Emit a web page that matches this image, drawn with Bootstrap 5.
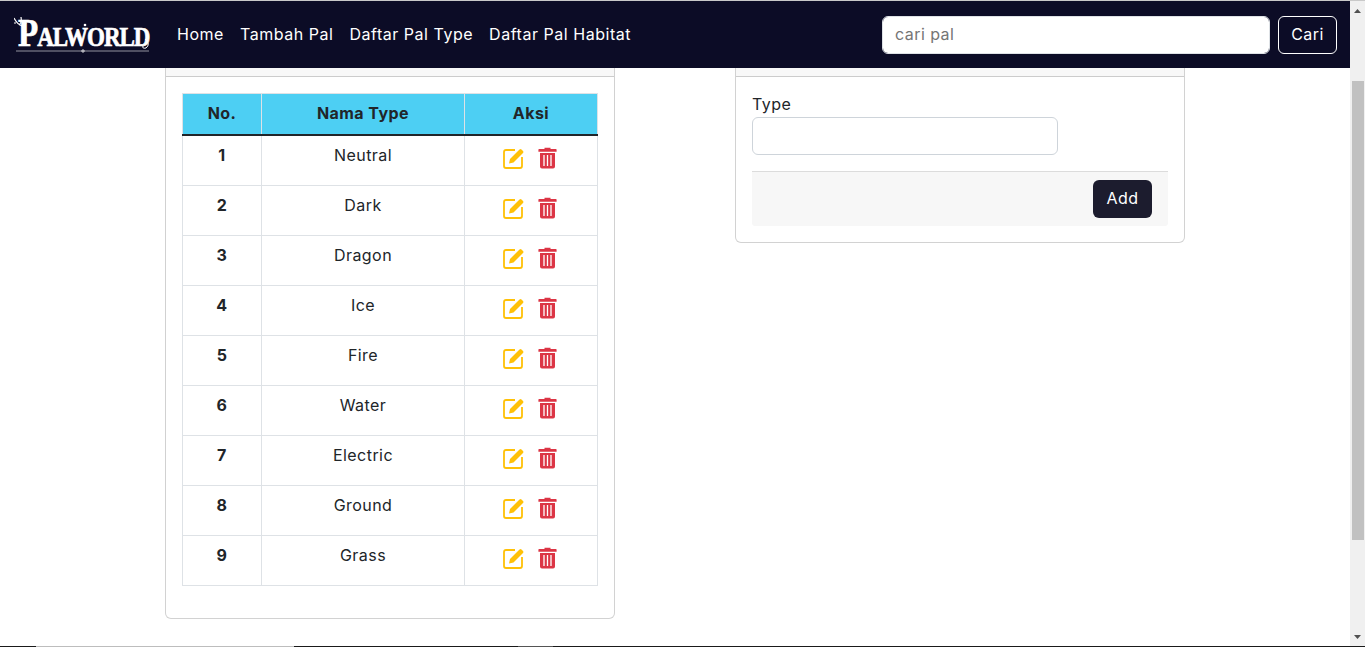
<!DOCTYPE html>
<html lang="id">
<head>
  <meta charset="UTF-8">
  <title>Daftar Pal Type</title>
  <link href="https://cdn.jsdelivr.net/npm/bootstrap@5.3.0/dist/css/bootstrap.min.css" rel="stylesheet">
  <style>
    html, body { height: 100%; overflow: hidden; }
    body { font-family: Inter, "Open Sans", sans-serif; font-size: 16px; letter-spacing: .45px; color: #212529; background: #fff; }
    .form-control, .btn { letter-spacing: .45px; }
    .top-edge { height: 1px; background: #c9c9c9; }
    .screen { height: 645px; }
    .page-col { min-width: 0; }
    .pal-nav { background: #0c0c26; height: 67px; padding: 0 13px 0 14px; }
    .pal-logo { width: 138px; height: 36px; margin-right: 17px; position: relative; color: #fff; text-decoration: none; }
    .pal-logo-text { font-family: "Liberation Serif", serif; font-weight: 700; font-variant: small-caps; font-size: 33px; line-height: 36px; letter-spacing: -1px; padding-left: 4px; white-space: nowrap; display: block; -webkit-text-stroke: .6px #fff; transform: scaleY(1.22); transform-origin: 0 28px; }
    .pal-logo svg { position: absolute; left: 0; top: 0; }
    .pal-nav .nav-link { color: #fff; padding: 0 8px 2px; font-size: 16px; letter-spacing: .53px; }
    .pal-search { width: 388px; height: 38px; margin-right: 8px; padding-bottom: 8px; }
    .pal-search::placeholder { color: #757575; }
    .btn-cari { width: 59px; height: 38px; padding: 0 0 2px; color: #fff; border-color: #fff; }
    .content-area { gap: 120px; }
    .pal-card { width: 450px; }
    .pal-card .card-header { height: 9px; padding: 0; }
    .pal-card-body { padding: 16px; }
    .pal-table { table-layout: fixed; width: 415px; margin-bottom: 16px; text-align: center; }
    .pal-table th, .pal-table td { padding: 7px 8px 8px; height: 50px; vertical-align: top; }
    .pal-table thead th { background: #4dcff3; height: 41px; padding: 6px 8px 8px; vertical-align: middle; border-bottom: 2px solid #212529; }
    .pal-table tbody tr:first-child > * { height: 51px; }
    .aksi-icons { gap: 13px; padding-top: 4px; padding-right: 2px; }
    .type-input { width: 306px; height: 38px; border-color: #ced4da; }
    .type-label { margin-bottom: 0; height: 24px; line-height: 22px; }
    .add-bar { background: #f7f7f7; border-top: 1px solid #dcdcdc; height: 55px; margin-top: 16px; padding: 8px 16px; border-radius: 0 0 3px 3px; }
    .btn-add { background: #1c1c2e; color: #fff; width: 59px; height: 38px; padding: 0 0 2px; }
    .fake-scroll { width: 15px; background: #f0f0f0; }
    .fake-arrow { height: 17px; }
    .fake-track { padding: 63px 1px 0 2px; }
    .fake-thumb { height: 459px; background: #c1c1c1; }
    .bottom-edge { height: 1px; background: #1a1a1a; }
    .bottom-seg { width: 258px; margin-left: 36px; background: #bdbdbd; }
    .bottom-seg-two { width: 35px; margin-left: 224px; background: #555; }
  </style>
</head>
<body>
  <div class="top-edge"></div>
  <div class="screen d-flex">
    <div class="page-col flex-grow-1 d-flex flex-column">
      <nav class="pal-nav d-flex align-items-center">
        <a class="pal-logo d-block" href="#">
          <span class="pal-logo-text">Palworld</span>
          <svg width="138" height="36" viewBox="0 0 138 36" fill="none" stroke="#fff">
            <path d="M0 1 Q3 7 8 9 L12 15 M2 6 L0 6 M5 8 Q8 6 7 0 M8 9 Q11 9 12 6" stroke-width="1.2"/>
            <path d="M2 34 H135" stroke-width=".8" opacity=".7"/>
            <circle cx="69" cy="34" r="1.2" stroke-width=".8"/>
            <circle cx="71" cy="8" r="1.3" fill="#fff" stroke="none"/>
            <path d="M131 22 q6 5 1 9 q-4 1 -3 -2" stroke-width="1"/>
          </svg>
        </a>
        <ul class="nav">
          <li class="nav-item"><a class="nav-link" href="#">Home</a></li>
          <li class="nav-item"><a class="nav-link" href="#">Tambah Pal</a></li>
          <li class="nav-item"><a class="nav-link" href="#">Daftar Pal Type</a></li>
          <li class="nav-item"><a class="nav-link" href="#">Daftar Pal Habitat</a></li>
        </ul>
        <form class="d-flex ms-auto">
          <input class="form-control pal-search" type="search" placeholder="cari pal">
          <button class="btn btn-cari" type="button">Cari</button>
        </form>
      </nav>

      <div class="content-area d-flex justify-content-center align-items-start">
        <div class="card pal-card border-top-0 rounded-top-0">
          <div class="card-header rounded-0"></div>
          <div class="pal-card-body">
            <table class="table table-bordered pal-table">
              <colgroup><col style="width:79px"><col style="width:203px"><col style="width:133px"></colgroup>
              <thead><tr><th>No.</th><th>Nama Type</th><th>Aksi</th></tr></thead>
              <tbody id="type-rows"></tbody>
            </table>
          </div>
        </div>

        <div class="card pal-card border-top-0 rounded-top-0">
          <div class="card-header rounded-0"></div>
          <div class="pal-card-body">
            <label class="form-label type-label d-block" for="type">Type</label>
            <input class="form-control type-input" id="type" type="text">
            <div class="add-bar d-flex justify-content-end">
              <button class="btn btn-add" type="button">Add</button>
            </div>
          </div>
        </div>
      </div>
    </div>

    <div class="fake-scroll d-flex flex-column flex-shrink-0">
      <div class="fake-arrow d-flex justify-content-center">
        <svg width="15" height="17" viewBox="0 0 15 17"><path d="M4 12 L7.5 8 L11 12 Z" fill="#505050"/></svg>
      </div>
      <div class="fake-track flex-grow-1"><div class="fake-thumb"></div></div>
      <div class="fake-arrow d-flex justify-content-center">
        <svg width="15" height="17" viewBox="0 0 15 17"><path d="M4 6 L7.5 10 L11 6 Z" fill="#505050"/></svg>
      </div>
    </div>
  </div>
  <div class="bottom-edge d-flex">
    <div class="bottom-seg"></div>
    <div class="bottom-seg-two"></div>
  </div>

  <script src="https://cdn.jsdelivr.net/npm/bootstrap@5.3.0/dist/js/bootstrap.bundle.min.js"></script>
  <script>
    const types = ["Neutral", "Dark", "Dragon", "Ice", "Fire", "Water", "Electric", "Ground", "Grass"];
    const editIcon = `<svg width="22" height="22" viewBox="0 0 22 22" fill="none"><path d="M12 3 H3 Q1 3 1 5 V19 Q1 21 3 21 H17 Q19 21 19 19 V10" stroke="#ffc107" stroke-width="1.8"/><path d="M6 16.5 L7 12 L16.5 2.5 Q17.5 1.5 18.5 2.5 L20 4 Q21 5 20 6 L10.5 15.5 Z" fill="#ffc107"/></svg>`;
    const trashIcon = `<svg width="19" height="22" viewBox="0 0 19 22"><path d="M6.5 2 V.8 H12.5 V2 H18 Q18.6 2 18.6 3 V4.8 H.4 V3 Q.4 2 1 2 Z M2 6 H17 V19.5 Q17 21.5 15 21.5 H4 Q2 21.5 2 19.5 Z" fill="#dc3545"/><path d="M6 8 V19 M9.5 8 V19 M13 8 V19" stroke="#fff" stroke-width="1.3"/></svg>`;
    document.getElementById("type-rows").innerHTML = types.map((name, i) => `
      <tr>
        <th>${i + 1}</th>
        <td>${name}</td>
        <td><div class="aksi-icons d-flex justify-content-center">${editIcon}${trashIcon}</div></td>
      </tr>`).join("");
  </script>
</body>
</html>
